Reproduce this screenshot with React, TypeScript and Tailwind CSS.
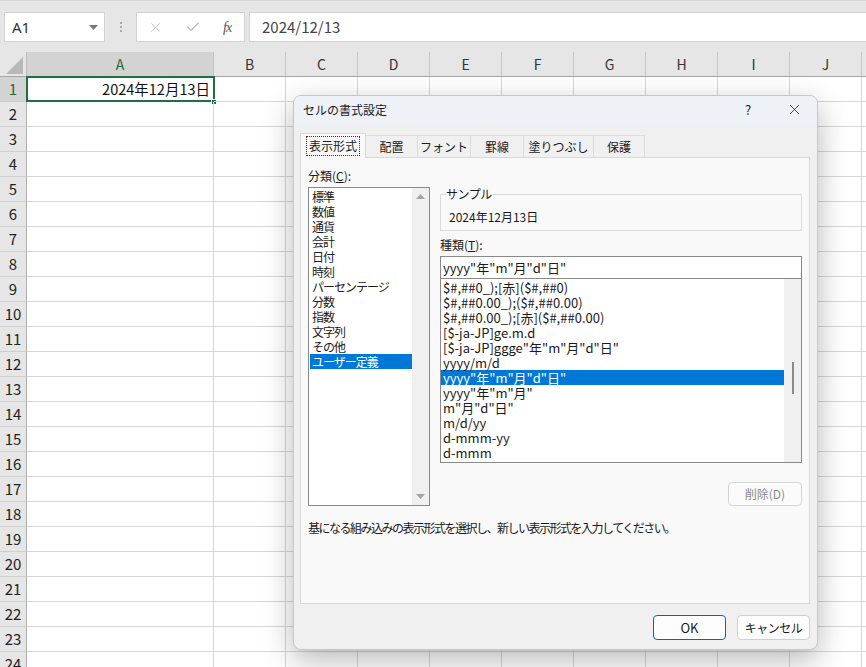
import React from 'react';
import { X, Check } from 'lucide-react';

const JP = "font-['Noto_Sans_CJK_JP','Noto_Sans',sans-serif]";

const COLS = ['A', 'B', 'C', 'D', 'E', 'F', 'G', 'H', 'I', 'J', 'K'];
const ROWS = Array.from({ length: 24 }, (_, i) => i + 1);

const CATEGORIES = [
  '標準', '数値', '通貨', '会計', '日付', '時刻', 'パーセンテージ',
  '分数', '指数', '文字列', 'その他', 'ユーザー定義',
];

const FORMATS = [
  '$#,##0_);[赤]($#,##0)',
  '$#,##0.00_);($#,##0.00)',
  '$#,##0.00_);[赤]($#,##0.00)',
  '[$-ja-JP]ge.m.d',
  '[$-ja-JP]ggge"年"m"月"d"日"',
  'yyyy/m/d',
  'yyyy"年"m"月"d"日"',
  'yyyy"年"m"月"',
  'm"月"d"日"',
  'm/d/yy',
  'd-mmm-yy',
  'd-mmm',
];

const TABS = [
  { label: '表示形式', w: 'w-[66px]' },
  { label: '配置', w: 'w-[52px]' },
  { label: 'フォント', w: 'w-[53px]' },
  { label: '罫線', w: 'w-[53px]' },
  { label: '塗りつぶし', w: 'w-[70px]' },
  { label: '保護', w: 'w-[51px]' },
];

const colWidth = (c: string) => (c === 'A' ? 'w-[187px]' : 'w-[72px]');

const FormulaBar = () => (
  <div className="h-[52px] bg-[#e6e6e6] border-t border-[#d6d6d6] pt-[11px] flex items-start">
    {/* name box */}
    <div className="ml-[4px] w-[101px] h-[30px] bg-white border border-[#d2d2d2] flex items-center pl-[7px] pr-[6px]">
      <span className="text-[15px] text-[#333]">A1</span>
      <svg className="ml-auto" width="9" height="5" viewBox="0 0 9 5">
        <path d="M0 0h9L4.5 5z" fill="#7a7a7a" />
      </svg>
    </div>
    <div className="w-[31px] h-[30px] flex flex-col items-center justify-center gap-[2px]">
      <div className="w-[2px] h-[2px] bg-[#a8a8a8]" />
      <div className="w-[2px] h-[2px] bg-[#a8a8a8]" />
      <div className="w-[2px] h-[2px] bg-[#a8a8a8]" />
    </div>
    {/* cancel / enter / fx */}
    <div className="w-[109px] h-[30px] bg-white border border-[#d2d2d2] flex items-center">
      <X size={15} strokeWidth={1.3} className="ml-[11px] text-[#b4b4b4]" />
      <Check size={16} strokeWidth={1.6} className="ml-[22px] text-[#b4b4b4]" />
      <span className="ml-[22px] font-['Liberation_Serif',serif] italic text-[14px] text-[#555] tracking-[-1px]">fx</span>
    </div>
    <div className="ml-[4px] flex-1 h-[30px] bg-white border border-[#d2d2d2] border-r-0 flex items-center pl-[12px]">
      <span className={`${JP} text-[15px] text-[#444]`}>2024/12/13</span>
    </div>
  </div>
);

const Grid = () => (
  <div className={`${JP}`}>
    {/* column headers */}
    <div className="flex h-[25px] bg-[#e6e6e6] border-b border-[#a6a6a6]">
      <div className="w-[27px] shrink-0 border-r border-[#bdbdbd] relative">
        <svg className="absolute right-[3px] bottom-[2px]" width="17" height="17" viewBox="0 0 17 17">
          <path d="M17 0v17H0z" fill="#b8b8b8" />
        </svg>
      </div>
      {COLS.map((c) => (
        <div
          key={c}
          className={`${colWidth(c)} shrink-0 border-r border-[#c4c4c4] flex items-center justify-center text-[14px] ${
            c === 'A' ? 'bg-[#d3d3d3] text-[#1d6b40]' : 'text-[#333]'
          }`}
        >
          {c}
        </div>
      ))}
    </div>
    {ROWS.map((r) => (
      <div key={r} className="flex h-[25px]">
        <div
          className={`w-[27px] shrink-0 border-r border-b border-r-[#b0b0b0] border-b-[#cfcfcf] flex items-center justify-center text-[15px] ${
            r === 1 ? 'bg-[#d3d3d3] text-[#1d6b40]' : 'bg-[#e6e6e6] text-[#222]'
          }`}
        >
          {r}
        </div>
        {COLS.map((c) => (
          <div
            key={c}
            className={`${colWidth(c)} shrink-0 border-r border-b border-[#d6d6d6] relative`}
          >
            {r === 1 && c === 'A' && (
              <>
                <div className="absolute -left-[1px] -top-[1px] -right-[2px] -bottom-[1px] border-2 border-[#1e6f42] flex items-center justify-end pr-[3px]">
                  <span className="text-[14.5px] text-[#111]">2024年12月13日</span>
                </div>
                <div className="absolute -right-[4px] -bottom-[4px] w-[6px] h-[6px] bg-[#1e6f42] border border-white" />
              </>
            )}
          </div>
        ))}
      </div>
    ))}
  </div>
);

const FormatDialog = () => (
  <div
    className={`absolute left-[293px] top-[95px] w-[525px] h-[555px] rounded-[8px] overflow-hidden bg-[#f0f0f0] border border-[#c6c6c6] shadow-[0_10px_30px_rgba(0,0,0,0.28)] text-[12px] text-[#1a1a1a] ${JP}`}
  >
    {/* title bar */}
    <div className="h-[30px] bg-[#eef2f7] flex items-center pb-[3px]">
      <span className="pl-[9px] text-[12px]">セルの書式設定</span>
      <div className="ml-auto flex h-full">
        <div className="w-[46px] flex items-center justify-center text-[13px]">?</div>
        <div className="w-[46px] flex items-center justify-center">
          <X size={17} strokeWidth={1.1} className="text-[#222]" />
        </div>
      </div>
    </div>

    <div className="pl-[6px] pr-[7px] pt-[7px]">
      {/* tabs */}
      <div className="flex items-end h-[24px]">
        {TABS.map((t, i) =>
          i === 0 ? (
            <div
              key={t.label}
              className={`${t.w} h-[25px] -mb-px relative z-10 bg-[#f9f9f9] border border-b-0 border-[#d9d9d9] flex items-center justify-center`}
            >
              <span className="border border-dotted border-[#333] px-[2px] leading-[18px]">{t.label}</span>
            </div>
          ) : (
            <div
              key={t.label}
              className={`${t.w} h-[22px] bg-[#f0f0f0] border-t border-r border-[#dcdcdc] flex items-center justify-center`}
            >
              {t.label}
            </div>
          )
        )}
      </div>

      {/* tab panel */}
      <div className="h-[447px] bg-[#f9f9f9] border border-[#d9d9d9] px-[7px] pt-[10px]">
        <div className="flex gap-[10px]">
          {/* category list */}
          <div className="w-[122px] flex flex-col">
            <div className="leading-[16px]">
              分類(<span className="underline">C</span>):
            </div>
            <div className="mt-[3px] h-[319px] bg-white border border-[#8a8a8a] flex">
              <div className="flex-1 pt-[1px] pl-[1px]">
                {CATEGORIES.map((c, i) => (
                  <div
                    key={c}
                    className={`h-[15px] leading-[15px] pl-[2px] tracking-[-1px] ${
                      i === CATEGORIES.length - 1 ? 'bg-[#0078d7] text-white' : ''
                    }`}
                  >
                    {c}
                  </div>
                ))}
              </div>
              <div className="w-[17px] bg-[#f0f0f0] flex flex-col items-center justify-between py-[6px]">
                <svg width="9" height="5" viewBox="0 0 9 5">
                  <path d="M0 5h9L4.5 0z" fill="#a3a3a3" />
                </svg>
                <svg width="9" height="5" viewBox="0 0 9 5">
                  <path d="M0 0h9L4.5 5z" fill="#a3a3a3" />
                </svg>
              </div>
            </div>
          </div>

          {/* right side */}
          <div className="w-[362px] flex flex-col pt-[19px]">
            <fieldset className="border border-[#dcdcdc] pb-[5px]">
              <legend className="ml-[5px] leading-[14px] tracking-[-0.5px]">サンプル</legend>
              <div className="mt-[8px] pl-[8px] leading-[16px]">2024年12月13日</div>
            </fieldset>
            <div className="mt-[6px] leading-[16px]">
              種類(<span className="underline">T</span>):
            </div>
            <div className="mt-[3px] h-[23px] bg-white border border-[#8a8a8a] flex items-center pl-[2px] text-[13px]">
              yyyy"年"m"月"d"日"
            </div>
            <div className="h-[184px] bg-white border border-[#8a8a8a] border-t-0 flex text-[13px]">
              <div className="flex-1 pt-[1px]">
                {FORMATS.map((f) => (
                  <div
                    key={f}
                    className={`h-[15px] leading-[15px] pl-[2px] whitespace-nowrap ${
                      f === 'yyyy"年"m"月"d"日"' ? 'bg-[#0078d7] text-white' : ''
                    }`}
                  >
                    {f}
                  </div>
                ))}
              </div>
              <div className="w-[17px] bg-[#f0f0f0] pt-[83px] flex justify-center">
                <div className="w-[2px] h-[32px] bg-[#8a8a8a]" />
              </div>
            </div>
            <div className="mt-[19px] flex justify-end">
              <div className="w-[74px] h-[24px] rounded-[4px] border border-[#d4d4d4] bg-[#fbfbfb] text-[#8a8a8a] flex items-center justify-center">
                削除(D)
              </div>
            </div>
          </div>
        </div>
        <div className="mt-[14px] leading-[16px] tracking-[-1.5px]">
          基になる組み込みの表示形式を選択し、新しい表示形式を入力してください。
        </div>
      </div>

      {/* buttons */}
      <div className="mt-[11px] flex justify-end gap-[11px]">
        <div className="w-[73px] h-[25px] rounded-[4px] border border-[#0067c0] bg-[#fdfdfd] flex items-center justify-center text-[13px]">
          OK
        </div>
        <div className="w-[73px] h-[25px] rounded-[4px] border border-[#d0d0d0] bg-[#fdfdfd] flex items-center justify-center tracking-[-0.5px]">
          キャンセル
        </div>
      </div>
    </div>
  </div>
);

export default function App() {
  return (
    <div className="relative w-[866px] h-[667px] overflow-hidden bg-white">
      <FormulaBar />
      <Grid />
      <FormatDialog />
    </div>
  );
}
